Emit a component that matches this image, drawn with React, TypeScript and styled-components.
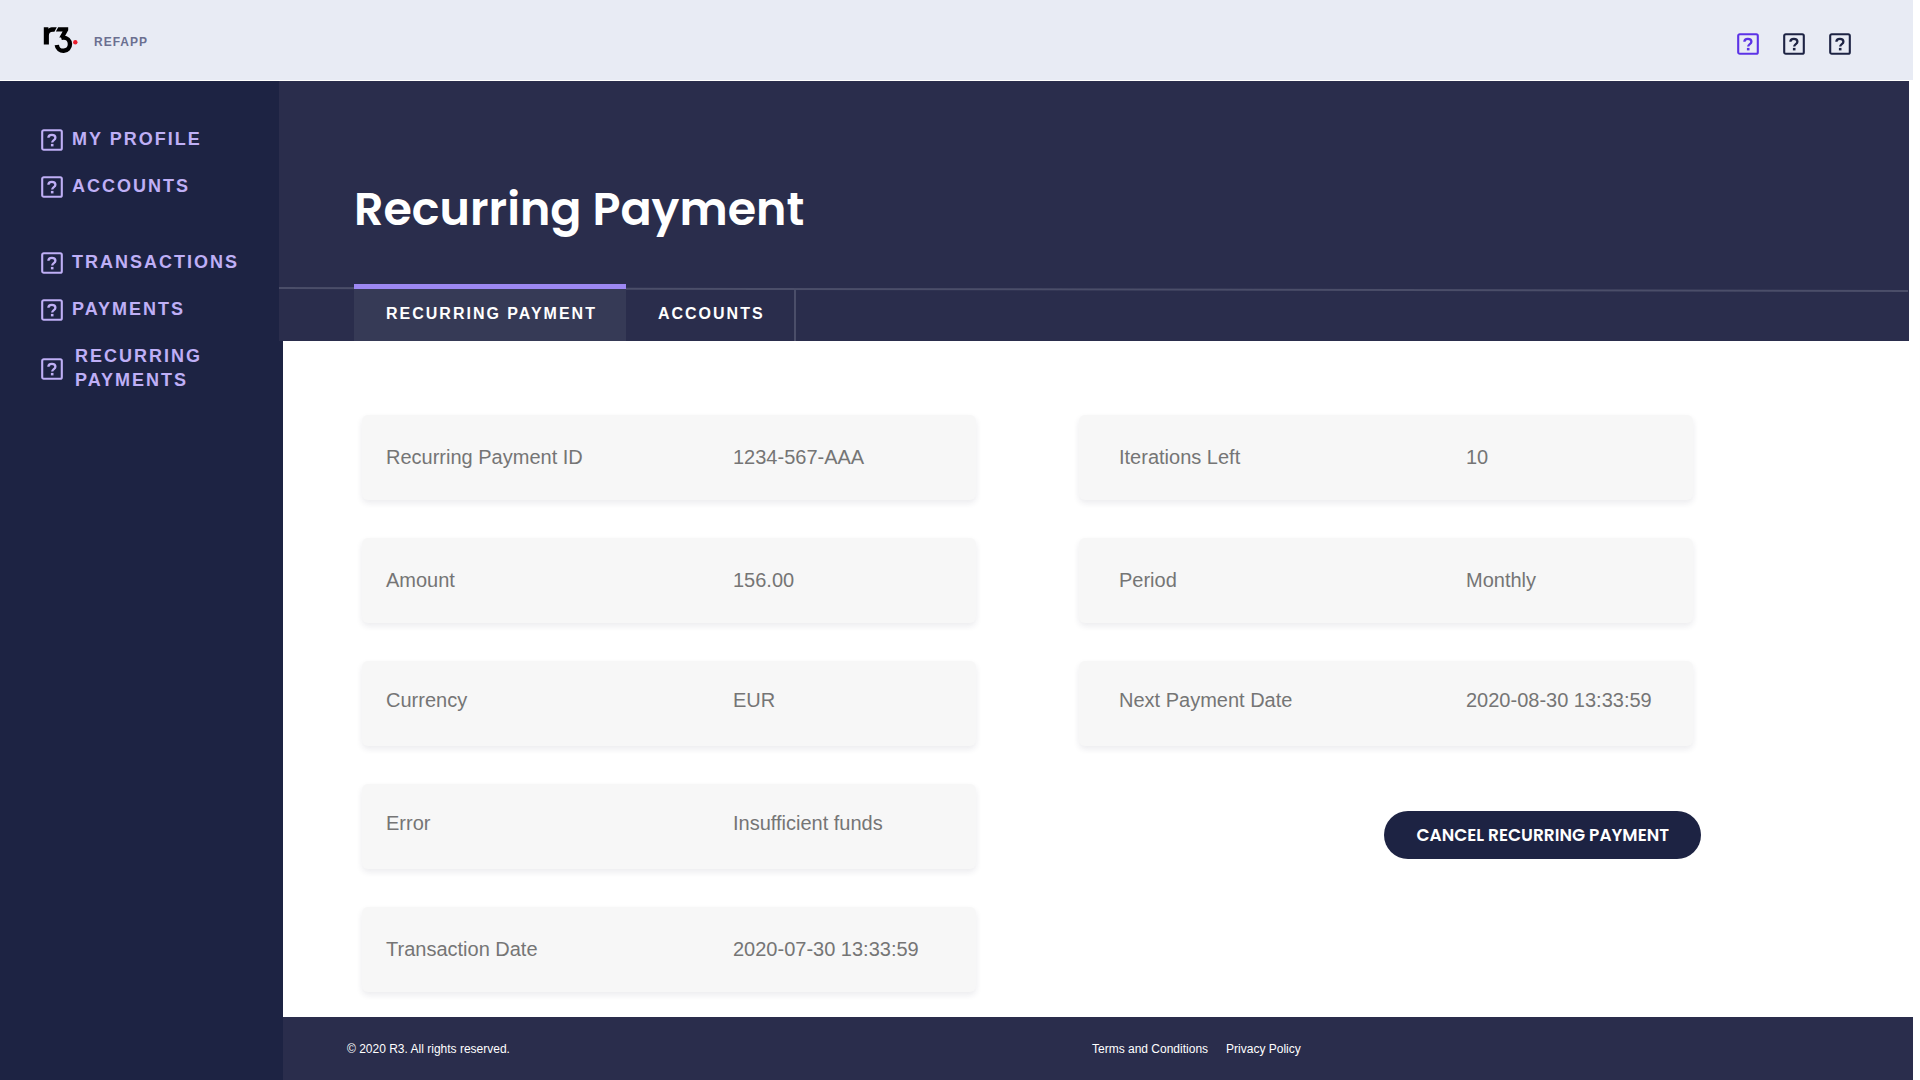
import React from 'react';
import styled, { createGlobalStyle } from 'styled-components';

const sans = `"Helvetica Neue", "Liberation Sans", Arial, sans-serif`;
const display = `Poppins, Inter, sans-serif`;

const color = {
  header: '#e8ebf4',
  navy: '#1d2343',
  slate: '#2a2d4c',
  tab: '#363a56',
  rule: '#4b4e69',
  accent: '#9d88f3',
  lilac: '#bfaff6',
  violet: '#5c33e6',
  muted: '#6b6f90',
  card: '#f7f7f7',
  text: '#757575',
  white: '#ffffff',
};

const GlobalStyle = createGlobalStyle`
  *, *::before, *::after { box-sizing: border-box; }
  body { margin: 0; background: ${color.white}; font-family: ${sans}; }
`;

const Page = styled.div`
  display: flex;
  flex-direction: column;
  min-height: 100vh;
  padding-right: 7px;
`;

const Header = styled.header`
  display: flex;
  align-items: center;
  justify-content: space-between;
  height: 80px;
  margin-bottom: 1px;
  padding: 0 62px 0 43px;
  background: ${color.header};
`;

const Brand = styled.a`
  display: flex;
  align-items: center;
  gap: 16px;
  color: ${color.muted};
  text-decoration: none;
`;

const BrandName = styled.span`
  padding-top: 4px;
  font-size: 12px;
  line-height: 16px;
  font-weight: 700;
  letter-spacing: 1px;
`;

const Actions = styled.div`
  display: flex;
  gap: 24px;
  padding-top: 8px;
`;

const IconButton = styled.button<{ $active?: boolean }>`
  display: flex;
  padding: 0;
  border: 0;
  background: none;
  color: ${(p) => (p.$active ? color.violet : color.navy)};
  cursor: pointer;
`;

const Body = styled.div`
  display: flex;
  flex: 1;
`;

const Sidebar = styled.nav`
  display: flex;
  flex-direction: column;
  flex: 0 0 283px;
  gap: 52px;
  padding: 46px 24px 46px 41px;
  background: ${color.navy};
`;

const NavGroup = styled.ul`
  display: flex;
  flex-direction: column;
  gap: 23px;
  margin: 0;
  padding: 0;
  list-style: none;
`;

const NavLink = styled.a<{ $wide?: boolean }>`
  display: flex;
  align-items: center;
  gap: ${(p) => (p.$wide ? 12 : 9)}px;
  color: ${color.lilac};
  font-size: 18px;
  line-height: 24px;
  font-weight: 700;
  letter-spacing: 2px;
  text-decoration: none;

  svg {
    margin-top: 2px;
  }
`;

const Main = styled.main`
  display: flex;
  flex: 1;
  flex-direction: column;
  min-width: 0;
`;

const Hero = styled.section`
  display: flex;
  flex-direction: column;
  margin: 0 4px 0 -4px;
  background: ${color.slate};
`;

const Title = styled.h1`
  margin: 0;
  padding: 92px 75px 39px;
  color: ${color.white};
  font-family: ${display};
  font-size: 46px;
  line-height: 72px;
  font-weight: 600;
`;

const TabBar = styled.div`
  position: relative;
  display: flex;
  padding-left: 75px;
`;

const TabRule = styled.svg`
  position: absolute;
  top: 3px;
  left: 0;
  width: 100%;
  height: 6px;
`;

const Tab = styled.button<{ $active?: boolean }>`
  position: relative;
  height: 57px;
  padding: 0 29px 2px 32px;
  border: 0;
  border-top: 5px solid ${(p) => (p.$active ? color.accent : 'transparent')};
  background: ${(p) => (p.$active ? color.tab : 'none')};
  color: ${color.white};
  font-family: ${sans};
  font-size: 16px;
  line-height: 24px;
  font-weight: 700;
  letter-spacing: 2px;
  cursor: pointer;
`;

const TabDivider = styled.span`
  align-self: flex-end;
  width: 2px;
  height: 52px;
  background: ${color.rule};
`;

const Content = styled.div`
  display: grid;
  flex: 1;
  grid-template-columns: 1fr 1fr;
  align-items: start;
  gap: 103px;
  padding: 74px 220px 25px 79px;
`;

const Column = styled.div`
  display: flex;
  flex-direction: column;
`;

const Details = styled.dl<{ $inset: number }>`
  display: flex;
  flex-direction: column;
  gap: 38px;
  margin: 0;

  > div {
    padding-left: ${(p) => p.$inset}px;
  }
`;

const Card = styled.div<{ $raised?: boolean }>`
  display: grid;
  grid-template-columns: 347px 1fr;
  align-items: center;
  height: 85px;
  padding-bottom: ${(p) => (p.$raised ? 8 : 2)}px;
  border-radius: 6px;
  background: ${color.card};
  box-shadow: 0 3px 6px rgba(29, 35, 68, 0.09);
  color: ${color.text};
  font-size: 20px;
  line-height: 24px;
`;

const Term = styled.dt``;

const Value = styled.dd`
  margin: 0;
`;

const CancelButton = styled.button`
  align-self: flex-end;
  height: 48px;
  margin: 65px -8px 0 0;
  padding: 0 32px;
  border: 0;
  border-radius: 24px;
  background: ${color.navy};
  color: ${color.white};
  font-family: ${display};
  font-size: 17px;
  line-height: 24px;
  font-weight: 600;
  white-space: nowrap;
  cursor: pointer;
`;

const Footer = styled.footer`
  display: grid;
  grid-template-columns: 745px 1fr;
  align-items: center;
  height: 63px;
  padding-left: 64px;
  background: ${color.slate};
  color: ${color.white};
  font-size: 12px;
  line-height: 16px;
`;

const FooterLinks = styled.div`
  display: flex;
  gap: 18px;
`;

const FooterLink = styled.a`
  color: inherit;
  text-decoration: none;
`;

const HelpIcon = () => (
  <svg width="22" height="22" viewBox="0 0 22 22" fill="none" stroke="currentColor" aria-hidden="true">
    <rect x="1.200" y="1.200" width="19.600" height="19.600" rx="1.600" strokeWidth="2.100" />
    <path d="M7.400 8.700C7.400 6.800 8.900 5.900 10.900 5.900s3.500 1 3.500 2.800c0 2.400-3.200 2.400-3.200 4.900" strokeWidth="2.300" />
    <path d="M11.200 14.900v2.500" strokeWidth="2.600" />
  </svg>
);

const Logo = () => (
  <svg width="35" height="28" viewBox="0 0 35 28" aria-hidden="true">
    <path d="M.8 1.300h4.600v1.500C6.700 1.700 8.300 1.300 10.100 1.300h3.700l-2.400 4.500H10C7 5.800 5.900 7.300 5.900 9.700v8.700H.8z" fill="#000" />
    <path d="M15.200 1.300H25.200V4.200L21.200 11.400H16.300L19.600 5.600H12.900z" fill="#000" />
    <path
      d="M18.200 11.900C18.900 11.700 19.700 11.600 20.500 11.600A6.600 6.600 0 1 1 13.800 18.900"
      fill="none"
      stroke="#000"
      strokeWidth="4.400"
    />
    <circle cx="32.300" cy="16.300" r="2.200" fill="#ec1d2c" />
  </svg>
);

type NavItem = { label: React.ReactNode; key: string; wide?: boolean };

const navGroups: NavItem[][] = [
  [
    { key: 'profile', label: 'MY PROFILE' },
    { key: 'accounts', label: 'ACCOUNTS' },
  ],
  [
    { key: 'transactions', label: 'TRANSACTIONS' },
    { key: 'payments', label: 'PAYMENTS' },
    { key: 'recurring', label: <>RECURRING<br />PAYMENTS</>, wide: true },
  ],
];

type Detail = { term: string; value: string; raised?: boolean };

const paymentDetails: Detail[] = [
  { term: 'Recurring Payment ID', value: '1234-567-AAA' },
  { term: 'Amount', value: '156.00' },
  { term: 'Currency', value: 'EUR', raised: true },
  { term: 'Error', value: 'Insufficient funds', raised: true },
  { term: 'Transaction Date', value: '2020-07-30 13:33:59' },
];

const scheduleDetails: Detail[] = [
  { term: 'Iterations Left', value: '10' },
  { term: 'Period', value: 'Monthly' },
  { term: 'Next Payment Date', value: '2020-08-30 13:33:59', raised: true },
];

const DetailList = ({ items, inset }: { items: Detail[]; inset: number }) => (
  <Details $inset={inset}>
    {items.map((item) => (
      <Card key={item.term} $raised={item.raised}>
        <Term>{item.term}</Term>
        <Value>{item.value}</Value>
      </Card>
    ))}
  </Details>
);

export default function App() {
  return (
    <>
      <GlobalStyle />
      <Page>
        <Header>
          <Brand href="#home" aria-label="R3 RefApp">
            <Logo />
            <BrandName>REFAPP</BrandName>
          </Brand>
          <Actions>
            <IconButton type="button" aria-label="Notifications" $active>
              <HelpIcon />
            </IconButton>
            <IconButton type="button" aria-label="Help">
              <HelpIcon />
            </IconButton>
            <IconButton type="button" aria-label="Account">
              <HelpIcon />
            </IconButton>
          </Actions>
        </Header>
        <Body>
          <Sidebar aria-label="Main">
            {navGroups.map((group) => (
              <NavGroup key={group[0].key}>
                {group.map((item) => (
                  <li key={item.key}>
                    <NavLink href={`#${item.key}`} $wide={item.wide}>
                      <HelpIcon />
                      <span>{item.label}</span>
                    </NavLink>
                  </li>
                ))}
              </NavGroup>
            ))}
          </Sidebar>
          <Main>
            <Hero>
              <Title>Recurring Payment</Title>
              <TabBar role="tablist">
                <TabRule viewBox="0 0 1630 6" preserveAspectRatio="none" aria-hidden="true">
                  <line x1="0" y1="1" x2="1629" y2="4" stroke={color.rule} strokeWidth="2" />
                </TabRule>
                <Tab type="button" role="tab" aria-selected="true" $active>
                  RECURRING PAYMENT
                </Tab>
                <Tab type="button" role="tab" aria-selected="false">
                  ACCOUNTS
                </Tab>
                <TabDivider />
              </TabBar>
            </Hero>
            <Content>
              <Column>
                <DetailList items={paymentDetails} inset={24} />
              </Column>
              <Column>
                <DetailList items={scheduleDetails} inset={40} />
                <CancelButton type="button">CANCEL RECURRING PAYMENT</CancelButton>
              </Column>
            </Content>
            <Footer>
              <span>© 2020 R3. All rights reserved.</span>
              <FooterLinks>
                <FooterLink href="#terms">Terms and Conditions</FooterLink>
                <FooterLink href="#privacy">Privacy Policy</FooterLink>
              </FooterLinks>
            </Footer>
          </Main>
        </Body>
      </Page>
    </>
  );
}
